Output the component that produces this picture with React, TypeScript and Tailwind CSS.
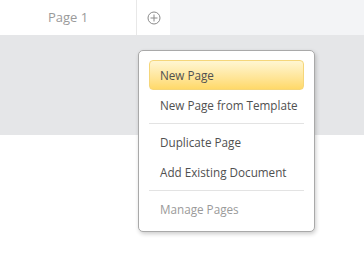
import React from 'react';

function PlusCircle() {
  return (
    <svg width="14" height="14" viewBox="0 0 14 14" fill="none" stroke="#8a8a8a" strokeWidth="1">
      <circle cx="7" cy="7" r="6" />
      <path d="M7 3.5v7M3.5 7h7" />
    </svg>
  );
}

const items = [
  { label: 'New Page', active: true },
  { label: 'New Page from Template' },
  { sep: true },
  { label: 'Duplicate Page' },
  { label: 'Add Existing Document' },
  { sep: true },
  { label: 'Manage Pages', disabled: true },
];

export default function App() {
  return (
    <div className="relative w-[364px] h-[257px] bg-white overflow-hidden" style={{ fontFamily: '"Open Sans", "Noto Sans", sans-serif' }}>
      <div className="flex h-[35px] bg-[#f3f4f6]">
        <div className="w-[137px] bg-white border-r border-[#e8e8e8] flex items-center justify-center text-[13px] text-[#9a9a9a]">
          Page 1
        </div>
        <div className="w-[33px] bg-white flex items-center justify-center">
          <PlusCircle />
        </div>
      </div>
      <div className="h-[100px] bg-[#e5e6e8]" />

      <div className="absolute left-[138px] top-[50px] w-[177px] bg-white border border-[#a9a9a9] rounded-[5px] shadow-[1px_2px_4px_rgba(0,0,0,0.2)] pt-[9px] pb-[7px] px-[10px]">
        {items.map((it, i) =>
          it.sep ? (
            <div key={i} className="my-[3px] h-px bg-[#e3e3e3]" />
          ) : (
            <div
              key={i}
              className={
                it.active
                  ? 'h-[30px] flex items-center pt-[2px] px-[10px] rounded-[4px] border border-[#f5d67a] bg-gradient-to-b from-[#fff6d2] to-[#ffd968] text-[11.7px] text-[#505050] whitespace-nowrap'
                  : 'h-[30px] flex items-center pt-[2px] px-[11px] text-[11.7px] whitespace-nowrap ' + (it.disabled ? 'text-[#9a9a9a]' : 'text-[#505050]')
              }
            >
              {it.label}
            </div>
          )
        )}
      </div>
    </div>
  );
}
